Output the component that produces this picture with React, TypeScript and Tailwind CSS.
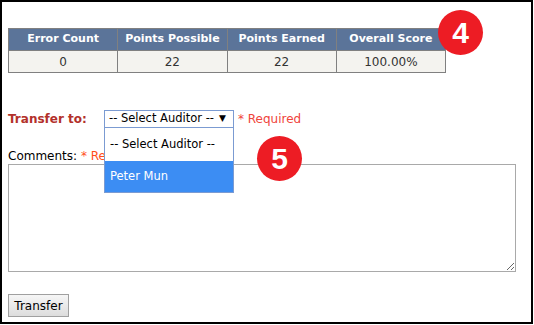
import React from 'react'

const cols = ['Error Count', 'Points Possible', 'Points Earned', 'Overall Score']
const vals = ['0', '22', '22', '100.00%']

const Badge: React.FC<{ n: string; className: string }> = ({ n, className }) => (
  <div
    className={`absolute w-[45px] h-[45px] rounded-full bg-[#ed1c24] flex items-center justify-center text-white text-[30px] font-bold leading-none ${className}`}
    style={{ fontFamily: '"Liberation Sans", Arial, sans-serif' }}
  >
    {n}
  </div>
)

export default function App() {
  return (
    <div
      className="relative w-[533px] h-[324px] border-2 border-black bg-white text-[12px] text-[#222]"
      style={{ fontFamily: '"DejaVu Sans", Verdana, sans-serif' }}
    >
      <div className="pl-[6px] pt-[26px]">
        {/* score table */}
        <table className="border-collapse w-[438px] table-fixed">
          <thead>
            <tr className="bg-[#5b7499] h-[22px]">
              {cols.map(c => (
                <th key={c} className="border border-[#808080] text-white text-[11px] font-bold p-0">{c}</th>
              ))}
            </tr>
          </thead>
          <tbody>
            <tr className="bg-[#f4f3ef] h-[22px]">
              {vals.map((v, i) => (
                <td key={i} className="border border-[#808080] text-center text-[12px] text-[#333] p-0">{v}</td>
              ))}
            </tr>
          </tbody>
        </table>

        {/* transfer row */}
        <div className="flex items-center mt-[37px] h-[18px]">
          <span className="w-[96px] text-[12px] font-bold text-[#b3312b]">Transfer to:</span>
          <div className="relative">
            <div className="w-[130px] h-[18px] border border-[#7b9bd2] flex items-center justify-between pl-[4px] pr-[7px] text-[11.5px] text-black whitespace-nowrap">
              <span>-- Select Auditor --</span>
              <span className="text-[9px]">▼</span>
            </div>
            {/* open dropdown */}
            <div className="absolute left-0 top-[18px] w-[130px] h-[65px] border border-[#7b9bd2] border-t-0 bg-white z-10 flex flex-col">
              <div className="h-[33px] flex items-center pl-[5px] text-[11.5px] text-black whitespace-nowrap">-- Select Auditor --</div>
              <div className="flex-1 flex items-center pl-[5px] bg-[#3c8df3] text-white text-[11.5px]">Peter Mun</div>
            </div>
          </div>
          <span className="ml-[4px] text-[12px] text-[#f0443c]">* Required</span>
        </div>

        {/* comments */}
        <div className="mt-[21px] text-[12px] leading-[14px] text-black">
          Comments: <span className="text-[#ff4d1a]">* Required</span>
        </div>
        <textarea className="block mt-[1px] w-[508px] h-[108px] border border-[#a9a9a9] resize" />

        <button className="mt-[22px] w-[61px] h-[23px] border border-[#a0a0a0] bg-gradient-to-b from-[#f6f6f6] to-[#dddddd] text-[12px] text-black">
          Transfer
        </button>
      </div>

      <Badge n="4" className="left-[436px] top-[8px]" />
      <Badge n="5" className="left-[255px] top-[134px]" />
    </div>
  )
}
